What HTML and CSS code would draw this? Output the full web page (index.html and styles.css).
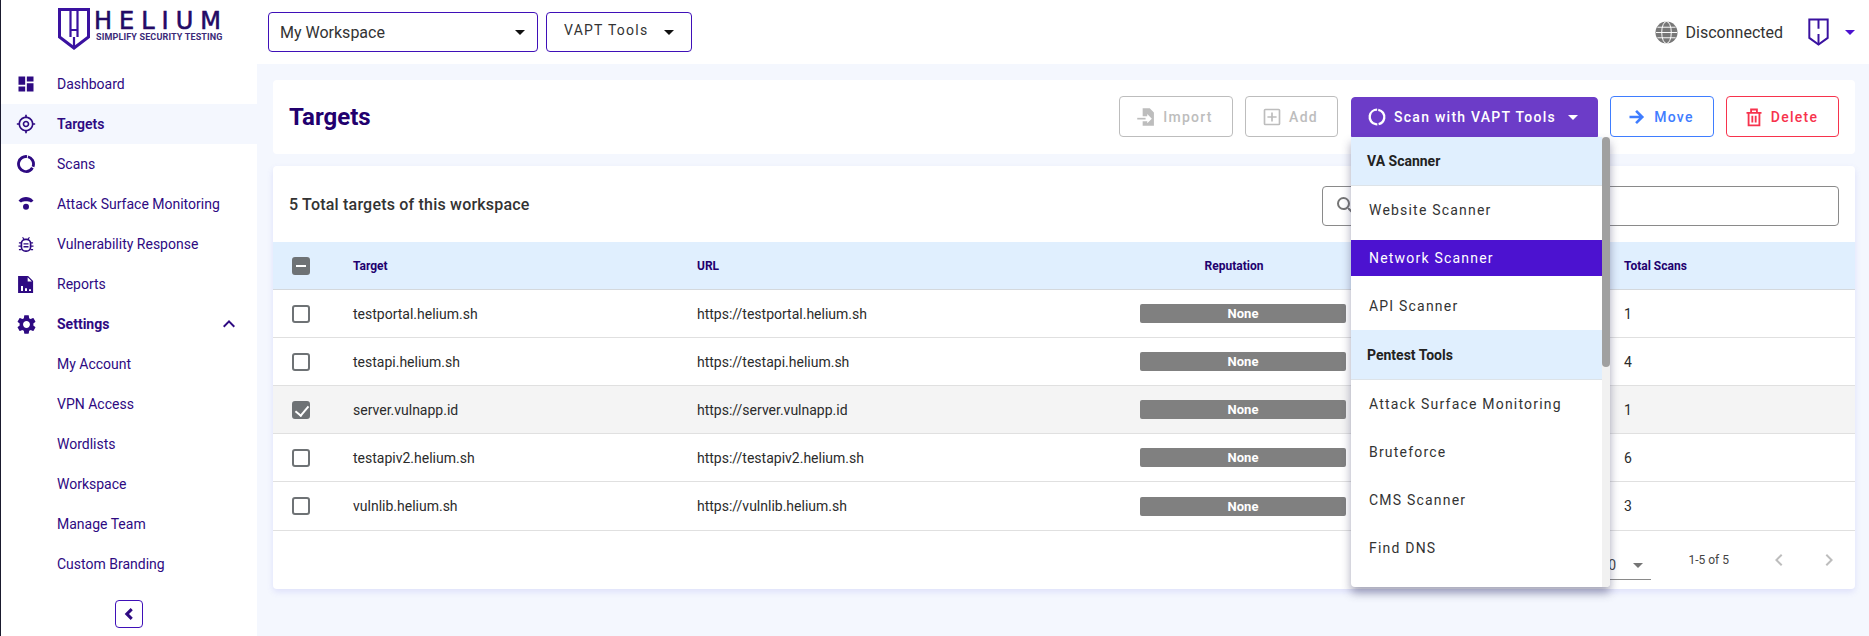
FILE: index.html
```html
<!DOCTYPE html>
<html lang="en">
<head>
<meta charset="utf-8">
<title>Targets - Helium</title>
<link rel="stylesheet" href="styles.css">
</head>
<body>
<div class="app">
  <aside class="sidebar">
    <div class="brand">
      <svg class="brand-shield" viewBox="0 0 32 42"><path d="M1.500 1.500h29v27.500L16 40 1.500 29z" fill="none" stroke="#3a12a0" stroke-width="3"/><path d="M12.500 2v27M19.500 2v27M12.500 22h7M16 29v11" fill="none" stroke="#3a12a0" stroke-width="2.200"/></svg>
      <div class="brand-text">
        <div class="brand-name">HELIUM</div>
        <div class="brand-tag">SIMPLIFY SECURITY TESTING</div>
      </div>
    </div>
    <nav class="nav">
      <a class="nav-item"><svg class="nav-icon" viewBox="0 0 24 24"><path d="M3 13h8V3H3v10zm0 8h8v-6H3v6zm10 0h8V11h-8v10zm0-18v6h8V3h-8z"/></svg><span>Dashboard</span></a>
      <a class="nav-item is-active"><svg class="nav-icon" viewBox="0 0 24 24"><path d="M12 8c-2.210 0-4 1.790-4 4s1.790 4 4 4 4-1.790 4-4-1.790-4-4-4zm0 6c-1.100 0-2-.9-2-2s.9-2 2-2 2 .9 2 2-.9 2-2 2zm8.940-3c-.46-4.170-3.770-7.480-7.940-7.940V1h-2v2.060C6.830 3.520 3.520 6.830 3.060 11H1v2h2.060c.46 4.170 3.770 7.480 7.940 7.940V23h2v-2.060c4.170-.46 7.480-3.770 7.940-7.940H23v-2h-2.060zM12 19c-3.870 0-7-3.130-7-7s3.130-7 7-7 7 3.130 7 7-3.130 7-7 7z"/></svg><span>Targets</span></a>
      <a class="nav-item"><svg class="nav-icon" viewBox="0 0 24 24"><circle cx="12" cy="12" r="9" fill="none" stroke="#2e0a82" stroke-width="3.400" stroke-dasharray="15 1.500 38.500 1.500" transform="rotate(-75 12 12)"/></svg><span>Scans</span></a>
      <a class="nav-item"><svg class="nav-icon" viewBox="0 0 24 24"><path d="M3 8C6 4.500 9 3.600 12 3.600S18 4.500 21 8l-3 2.200C16 9 14 8.800 12 8.800S8 9 6 10.200z"/><circle cx="12" cy="15.400" r="3.600"/></svg><span>Attack Surface Monitoring</span></a>
      <a class="nav-item"><svg class="nav-icon" viewBox="0 0 24 24"><rect x="6.500" y="6.500" width="11" height="14" rx="5" fill="none" stroke="#2e0a82" stroke-width="2"/><path d="M9 11h6v1.600H9zM9 14.500h6v1.600H9zM3.500 10h3v1.500h-3zM17.500 10h3v1.500h-3zM3 13.800h3.500v1.500H3zM17.500 13.800H21v1.500h-3.500zM3.500 18h3v1.500h-3zM17.500 18h3v1.500h-3zM8.500 3.500l2 3-1.200.8-2-3zM15.500 3.500l1.200.8-2 3-1.200-.8z"/></svg><span>Vulnerability Response</span></a>
      <a class="nav-item"><svg class="nav-icon" viewBox="0 0 24 24"><path d="M2.500 2.400h12l6 6v14.400h-18zM6 14.500v6h2.400v-6zM10.800 17v3.500h2.400V17zM15.600 18.200v2.300H18v-2.300zM14 4v5h5z" fill-rule="evenodd"/></svg><span>Reports</span></a>
      <a class="nav-item is-strong"><svg class="nav-icon nav-icon-lg" viewBox="0 0 24 24"><path d="M19.140 12.940c.04-.3.06-.61.06-.94 0-.32-.02-.64-.07-.94l2.030-1.580c.18-.14.23-.41.12-.61l-1.920-3.320c-.12-.22-.37-.29-.59-.22l-2.390.96c-.5-.38-1.030-.7-1.620-.94l-.36-2.540c-.04-.24-.24-.41-.48-.41h-3.840c-.24 0-.43.17-.47.41l-.36 2.540c-.59.24-1.130.57-1.620.94l-2.390-.96c-.22-.08-.47 0-.59.22L2.740 8.870c-.12.21-.08.47.12.61l2.030 1.580c-.05.3-.09.63-.09.94s.02.64.07.94l-2.030 1.580c-.18.14-.23.41-.12.61l1.920 3.320c.12.22.37.29.59.22l2.390-.96c.5.38 1.030.7 1.620.94l.36 2.540c.05.24.24.41.48.41h3.840c.24 0 .44-.17.47-.41l.36-2.540c.59-.24 1.130-.56 1.620-.94l2.390.96c.22.08.47 0 .59-.22l1.920-3.320c.12-.22.07-.47-.12-.61l-2.010-1.580zM12 15.600c-1.980 0-3.600-1.620-3.600-3.600s1.620-3.600 3.600-3.600 3.600 1.620 3.600 3.600-1.620 3.600-3.600 3.600z"/></svg><span>Settings</span><svg class="nav-chevron" viewBox="0 0 24 24"><path d="M12 8l-6 6 1.410 1.410L12 10.830l4.590 4.580L18 14z"/></svg></a>
      <a class="nav-item nav-sub"><span>My Account</span></a>
      <a class="nav-item nav-sub"><span>VPN Access</span></a>
      <a class="nav-item nav-sub"><span>Wordlists</span></a>
      <a class="nav-item nav-sub"><span>Workspace</span></a>
      <a class="nav-item nav-sub"><span>Manage Team</span></a>
      <a class="nav-item nav-sub"><span>Custom Branding</span></a>
    </nav>
    <button class="collapse"><svg viewBox="0 0 24 24"><path d="M15.410 7.410L14 6l-6 6 6 6 1.410-1.410L10.830 12z" stroke="#2e0a82" stroke-width="1.600"/></svg></button>
  </aside>

  <div class="main">
    <header class="topbar">
      <div class="select select-workspace"><span>My Workspace</span><i class="caret"></i></div>
      <div class="select select-tools"><span>VAPT Tools</span><i class="caret"></i></div>
      <div class="status">
        <svg class="globe" viewBox="0 0 24 24"><circle cx="12" cy="12" r="11.500" fill="#777"/><path d="M1 12h22M2.500 6.500h19M2.500 17.500h19" stroke="#fff" stroke-width="1" fill="none"/><ellipse cx="12" cy="12" rx="5" ry="11.500" fill="none" stroke="#fff" stroke-width="1"/></svg>
        <span>Disconnected</span>
      </div>
      <div class="account">
        <svg class="account-shield" viewBox="0 0 32 42"><path d="M2 2h28v28L16 40 2 30z" fill="none" stroke="#3a12a0" stroke-width="3"/><path d="M16 2v14M16 24v16" stroke="#3a12a0" stroke-width="3"/></svg>
        <i class="caret caret-purple"></i>
      </div>
    </header>

    <main class="content">
      <section class="card head-card">
        <h1>Targets</h1>
        <div class="actions">
          <button class="btn btn-disabled btn-import"><svg viewBox="0 0 24 24"><path d="M8 1.500h8.500l5 5V22.500H8V17h5.500v2.500L19 14l-5.500-5.500V11H8z"/><path d="M1.500 13h10v2h-10z"/></svg>Import</button>
          <button class="btn btn-disabled btn-add"><svg viewBox="0 0 24 24"><path d="M4 2h16a2 2 0 0 1 2 2v16a2 2 0 0 1-2 2H4a2 2 0 0 1-2-2V4a2 2 0 0 1 2-2zm0 2v16h16V4zm7 2.500h2V11h4.500v2H13v4.500h-2V13H6.500v-2H11z" fill-rule="evenodd"/></svg>Add</button>
          <div class="scan-wrap">
            <button class="btn btn-scan"><svg viewBox="0 0 24 24"><circle cx="12" cy="12" r="8.800" fill="none" stroke="#fff" stroke-width="2.800" stroke-dasharray="24 1.500 28 1.800" transform="rotate(-80 12 12)"/></svg>Scan with VAPT Tools<i class="caret caret-white"></i></button>
            <div class="menu">
              <div class="menu-head">VA Scanner</div>
              <div class="menu-item">Website Scanner</div>
              <div class="menu-item is-selected"><span>Network Scanner</span></div>
              <div class="menu-item">API Scanner</div>
              <div class="menu-head menu-head-tall">Pentest Tools</div>
              <div class="menu-item">Attack Surface Monitoring</div>
              <div class="menu-item">Bruteforce</div>
              <div class="menu-item">CMS Scanner</div>
              <div class="menu-item">Find DNS</div>
              <div class="menu-track"><div class="menu-thumb"></div></div>
            </div>
          </div>
          <button class="btn btn-move"><svg viewBox="0 0 24 24"><path d="M12 3.500L9.800 5.700l4.700 4.700H3v3.200h11.500l-4.700 4.700 2.200 2.200L20.500 12z"/></svg>Move</button>
          <button class="btn btn-delete"><svg viewBox="0 0 24 24" fill="none" stroke="#f7334d" stroke-width="2.200"><path d="M5.500 7h13v15h-13zM3 7h18M8.500 7V3h7v4M10 10.500v8M14 10.500v8"/></svg>Delete</button>
        </div>
      </section>

      <section class="card table-card">
        <div class="table-top">
          <div class="table-title">5 Total targets of this workspace</div>
          <div class="search"><svg viewBox="0 0 24 24"><path d="M15.500 14h-.79l-.28-.27A6.470 6.470 0 0 0 16 9.500 6.500 6.500 0 1 0 9.500 16c1.610 0 3.090-.59 4.230-1.570l.27.28v.79l5 4.990L20.490 19l-4.990-5zm-6 0C7.010 14 5 11.990 5 9.500S7.010 5 9.500 5 14 7.010 14 9.500 11.990 14 9.500 14z"/></svg></div>
        </div>
        <div class="row row-header">
          <div class="cell cell-check"><i class="check check-mixed"></i></div>
          <div class="cell">Target</div>
          <div class="cell">URL</div>
          <div class="cell cell-rep-head">Reputation</div>
          <div class="cell"></div>
          <div class="cell">Total Scans</div>
        </div>
        <div class="row">
          <div class="cell cell-check"><i class="check"></i></div>
          <div class="cell">testportal.helium.sh</div>
          <div class="cell">https://testportal.helium.sh</div>
          <div class="cell"><span class="badge">None</span></div>
          <div class="cell"></div>
          <div class="cell">1</div>
        </div>
        <div class="row">
          <div class="cell cell-check"><i class="check"></i></div>
          <div class="cell">testapi.helium.sh</div>
          <div class="cell">https://testapi.helium.sh</div>
          <div class="cell"><span class="badge">None</span></div>
          <div class="cell"></div>
          <div class="cell">4</div>
        </div>
        <div class="row is-checked">
          <div class="cell cell-check"><i class="check check-on"></i></div>
          <div class="cell">server.vulnapp.id</div>
          <div class="cell">https://server.vulnapp.id</div>
          <div class="cell"><span class="badge">None</span></div>
          <div class="cell"></div>
          <div class="cell">1</div>
        </div>
        <div class="row">
          <div class="cell cell-check"><i class="check"></i></div>
          <div class="cell">testapiv2.helium.sh</div>
          <div class="cell">https://testapiv2.helium.sh</div>
          <div class="cell"><span class="badge">None</span></div>
          <div class="cell"></div>
          <div class="cell">6</div>
        </div>
        <div class="row row-last">
          <div class="cell cell-check"><i class="check"></i></div>
          <div class="cell">vulnlib.helium.sh</div>
          <div class="cell">https://vulnlib.helium.sh</div>
          <div class="cell"><span class="badge">None</span></div>
          <div class="cell"></div>
          <div class="cell">3</div>
        </div>
        <div class="pager">
          <div class="pager-size"><span>10</span><i class="caret caret-grey"></i></div>
          <div class="pager-range">1-5 of 5</div>
          <svg class="pager-arrow" viewBox="0 0 24 24"><path d="M15.410 7.410L14 6l-6 6 6 6 1.410-1.410L10.830 12z"/></svg>
          <svg class="pager-arrow" viewBox="0 0 24 24"><path d="M10 6L8.590 7.410 13.170 12l-4.580 4.590L10 18l6-6z"/></svg>
        </div>
      </section>
    </main>
  </div>
</div>
</body>
</html>
```

FILE: styles.css
```css
* { box-sizing: border-box; }
html, body { margin: 0; height: 100%; }
body {
  font-family: Roboto, "Liberation Sans", sans-serif;
  font-size: 14px;
  color: #2b2b2b;
  background: #f4f7fe;
  overflow: hidden;
}
.app { display: flex; height: 636px; }

/* Sidebar */
.sidebar {
  width: 257px;
  flex: none;
  background: #fff;
  border-left: 1px solid #1a1a2e;
  display: flex;
  flex-direction: column;
}
.brand { height: 64px; display: flex; align-items: flex-start; padding: 8px 0 0 57px; }
.brand-shield { width: 32px; height: 42px; flex: none; }
.brand-text { margin-left: 4px; padding-top: 2px; }
.brand-name {
  font-family: "DejaVu Sans", Roboto, sans-serif;
  font-size: 24px;
  line-height: 22px;
  height: 22px;
  letter-spacing: 7px;
  -webkit-text-stroke: .6px #230a66;
  color: #230a66;
  white-space: nowrap;
}
.brand-tag {
  font-size: 9px;
  line-height: 10px;
  margin-left: 2px;
  font-weight: 700;
  letter-spacing: .15px;
  color: #3b2a78;
  white-space: nowrap;
}
.nav { display: flex; flex-direction: column; }
.nav-item {
  height: 40px;
  display: flex;
  align-items: center;
  padding-left: 15px;
  color: #2e0a82;
}
.nav-item span { margin-left: 21px; }
.nav-item.is-active { background: #f4f7fe; font-weight: 600; }
.nav-item.is-strong { font-weight: 700; }
.nav-item.nav-sub { padding-left: 35px; }
.nav-icon { width: 20px; height: 20px; flex: none; fill: #2e0a82; }
.nav-icon-lg { width: 23px; height: 23px; margin: 0 -1.500px; }
.nav-chevron { width: 24px; height: 24px; margin-left: auto; margin-right: 16px; fill: #2e0a82; }
.collapse {
  align-self: flex-start;
  margin: 16px 0 0 114px;
  width: 28px;
  height: 28px;
  padding: 0;
  background: #fff;
  border: 1px solid #3f10b8;
  border-radius: 4px;
  display: flex;
  align-items: center;
  justify-content: center;
}
.collapse svg { width: 20px; height: 20px; fill: #2e0a82; }

/* Top bar */
.main { flex: 1; min-width: 0; display: flex; flex-direction: column; }
.topbar {
  height: 64px;
  flex: none;
  background: #fff;
  margin-left: -1px;
  display: flex;
  align-items: center;
  padding-left: 12px;
}
.select {
  height: 40px;
  border: 1px solid #3f10b8;
  border-radius: 4px;
  display: flex;
  align-items: center;
  justify-content: space-between;
}
.select-workspace { width: 270px; padding: 0 12px 0 11px; font-size: 16px; color: #333; }
.select-tools {
  width: 146px;
  margin-left: 8px;
  padding: 0 17px 4px 17px;
  letter-spacing: 1.25px;
  color: #333;
}
.select-tools .caret { margin-top: 4px; }
.caret {
  display: inline-block;
  width: 0;
  height: 0;
  border-left: 5px solid transparent;
  border-right: 5px solid transparent;
  border-top: 5px solid #111;
}
.caret-purple { border-top-color: #4c12d0; }
.caret-white { border-top-color: #fff; }
.caret-grey { border-top-color: #757575; }
.status {
  margin-left: auto;
  display: flex;
  align-items: center;
  font-size: 16px;
  color: #333;
}
.globe { width: 23px; height: 23px; margin-right: 8px; }
.account { display: flex; align-items: center; margin-left: 25px; margin-right: 14px; }
.account-shield { width: 21px; height: 28px; margin-right: 16px; }

/* Content */
.content { flex: 1; padding: 16px 14px 0 16px; display: flex; flex-direction: column; gap: 12px; }
.card { background: #fff; border-radius: 4px; }
.head-card {
  height: 74px;
  display: flex;
  align-items: center;
  justify-content: space-between;
  padding: 0 16px;
}
h1 { margin: 0; font-size: 24px; font-weight: 700; color: #22006e; }
.actions { display: flex; align-items: flex-start; gap: 12px; margin-bottom: 1px; }
.btn {
  height: 41px;
  padding: 0 3px 0 0;
  display: flex;
  align-items: center;
  justify-content: center;
  font-family: inherit;
  font-size: 14px;
  font-weight: 500;
  letter-spacing: 1.25px;
  background: #fff;
  border: 1px solid;
  border-radius: 4px;
}
.btn svg { width: 20px; height: 20px; margin-right: 7px; flex: none; }
.btn-disabled { color: #bdbdbd; border-color: #bdbdbd; }
.btn-disabled svg { fill: #bdbdbd; }
.btn-import { width: 114px; }
.btn-add { width: 93px; margin-right: 1px; }
.btn-scan { width: 247px; height: 40px; margin-top: 1px; padding-right: 4px; color: #fff; background: #6c3cc8; border-color: #6c3cc8; border-radius: 4px 4px 0 0; }
.btn-scan .caret { margin-left: 12px; }
.btn-move { width: 104px; color: #3f7dff; border-color: #3f7dff; }
.btn-move svg { fill: #3f7dff; }
.btn-delete { width: 113px; color: #f7334d; border-color: #f7334d; }
.scan-wrap { position: relative; width: 247px; }
.menu {
  position: absolute;
  top: 100%;
  left: 0;
  z-index: 5;
  width: 259px;
  height: 450px;
  padding-right: 8px;
  background: #fff;
  border-radius: 0 0 4px 4px;
  box-shadow: 0 6px 10px rgba(60, 60, 100, .45);
  overflow: hidden;
}
.menu-head {
  height: 49px;
  display: flex;
  align-items: center;
  padding-left: 16px;
  font-weight: 700;
  color: #222;
  background: #e0effe;
  border-bottom: 1px solid #dde3e8;
}
.menu-head-tall { height: 50px; }
.menu-item {
  height: 48px;
  display: flex;
  align-items: center;
  padding-left: 18px;
  letter-spacing: 1.2px;
  color: #333;
}
.menu-item.is-selected { padding: 6px 0; }
.menu-item.is-selected span {
  flex: 1;
  height: 36px;
  display: flex;
  align-items: center;
  padding-left: 18px;
  color: #fff;
  background: #4c12d0;
}
.menu-track { position: absolute; top: 0; right: 0; bottom: 0; width: 8px; background: #f1f1f1; }
.menu-thumb { height: 230px; background: #a0a0a0; border-radius: 4px; }

.table-card { height: 423px; box-shadow: 0 3px 6px rgba(100, 100, 230, .15); }
.table-top {
  height: 76px;
  display: flex;
  align-items: center;
  justify-content: space-between;
  padding: 0 16px;
}
.table-title { font-size: 16px; font-weight: 500; letter-spacing: .2px; color: #333; }
.search {
  width: 517px;
  height: 40px;
  margin-top: 4px;
  border: 1px solid #8a8a8a;
  border-radius: 4px;
  display: flex;
  align-items: center;
  padding-left: 11px;
}
.search svg { width: 24px; height: 24px; fill: #757575; }
.row {
  height: 48px;
  display: grid;
  grid-template-columns: 80px 344px 443px 206px 278px 1fr;
  align-items: center;
  border-bottom: 1px solid #e0e0e0;
}
.row-header { padding-top: 1px; background: #e0effe; font-size: 12px; font-weight: 700; color: #22006e; border-bottom-color: #d4d8dc; }
.row-last { height: 49px; }
.row.is-checked { background: #f4f4f4; }
.cell { white-space: nowrap; min-width: 0; }
.cell-check { padding-left: 19px; display: flex; }
.cell-rep-head { text-align: center; padding-right: 18px; }
.check {
  display: block;
  position: relative;
  width: 18px;
  height: 18px;
  border: 2px solid #6e7275;
  border-radius: 3px;
}
.check-mixed, .check-on { background: #6e7275; }
.check-mixed::after {
  content: "";
  position: absolute;
  left: 2px;
  top: 6px;
  width: 10px;
  height: 2px;
  background: #fff;
}
.check-on::after {
  content: "";
  position: absolute;
  left: 4px;
  top: 0;
  width: 6px;
  height: 11px;
  border: solid #fff;
  border-width: 0 2px 2px 0;
  transform: rotate(40deg);
}
.badge {
  display: block;
  height: 19px;
  line-height: 19px;
  text-align: center;
  font-size: 13px;
  font-weight: 700;
  color: #fff;
  background: #808080;
  border-radius: 2px;
}
.pager {
  height: 58px;
  display: flex;
  align-items: center;
  justify-content: flex-end;
  padding-right: 14px;
  font-size: 12px;
  color: #444;
}
.pager-size {
  width: 48px;
  height: 36px;
  display: flex;
  align-items: center;
  justify-content: space-between;
  padding: 7px 8px 0 0;
  border-bottom: 1px solid #8a8a8a;
  margin-top: 4px;
  font-size: 14px;
}
.pager-size span { margin-left: -3px; }
.pager-range { margin-left: 37px; margin-right: 38px; }
.pager-arrow { width: 24px; height: 24px; fill: #bdbdbd; margin-left: 26px; }
.pager-range + .pager-arrow { margin-left: 0; }
```
